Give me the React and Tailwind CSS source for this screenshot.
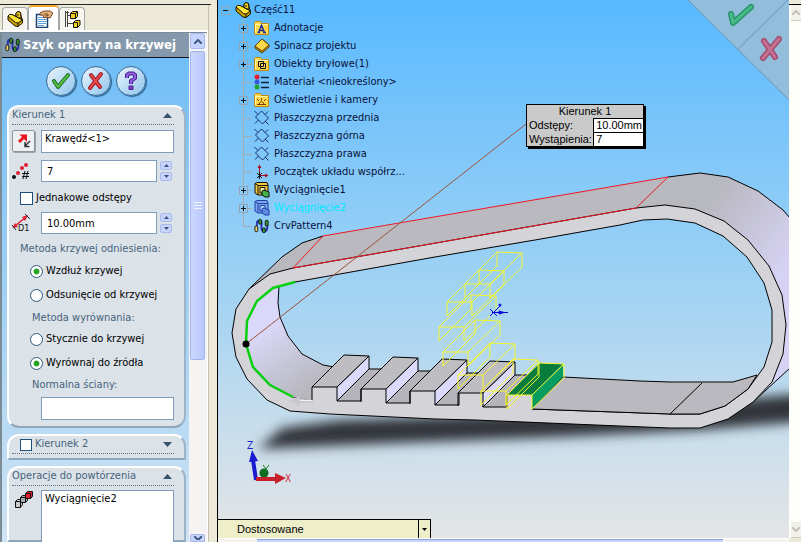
import React, { useState } from "react";

const PartIcon = () => (
  <svg className="w-4 h-4 shrink-0" viewBox="0 0 16 16" stroke="#1a1600" strokeWidth="1" strokeLinejoin="round">
    <path d="M1 5 L2.500 3.500 L5 3.500 L7 5 L9 5 L9 2 L11 0.500 L13.500 1.500 L14 5 L15.500 9 V12 L11 15.500 L8 15 L1 9 Z" fill="#c79f00" />
    <path d="M1 5 L2.500 3.500 L5 3.500 L15.500 9 L11 12 L8.500 11.500 Z" fill="#ffe63a" />
    <path d="M9 5 V2 L11 0.500 L13.500 1.500 L14 7.500 L10 6 Z" fill="#f3d024" />
    <path d="M11 12 V15.500 M11 3 V5" fill="none" />
  </svg>
);

const PropertiesIcon = () => (
  <svg className="w-[18px] h-[18px]" viewBox="0 0 18 18">
    <path d="M1.500 4.500 H12.500 V17.500 H1.500 Z" fill="#fff" stroke="#1a3d6e" strokeWidth="1.500" />
    <path d="M3 7.500 H11 M3 9.500 H11 M3 11.500 H11 M3 13.500 H11 M3 15.500 H9" stroke="#5aa2dc" />
    <path d="M5 3 L9 1 L15 1 L18 3 L15 8 L12 7 L9 8 L8 5 L5 5 Z" fill="#e9b27c" stroke="#7a4a22" />
    <path d="M9 4 L13 4 M10 6 L14 5" stroke="#7a4a22" />
  </svg>
);

const ConfigIcon = () => (
  <svg className="w-[18px] h-[18px]" viewBox="0 0 18 18" stroke="#111">
    <path d="M2.500 1 V17 M4.500 1 V17 M2 2.500 H6 M4 5.500 H9 M4 13.500 H10" fill="none" stroke="#444" />
    <path d="M7.500 3.500 L9.500 1.500 H14.500 V6.500 L12.500 8.500 H7.500 Z" fill="#f2cf1c" />
    <path d="M7.500 3.500 H12.500 V8.500 M12.500 3.500 L14.500 1.500" fill="none" />
    <path d="M10.500 12.500 L12.500 10.500 H17 V15 L14.500 17.500 H10.500 Z" fill="#f2cf1c" />
    <path d="M10.500 12.500 H14.500 V17.500" fill="none" />
  </svg>
);

const CurvePatternIcon = () => (
  <svg className="w-4 h-4 shrink-0" viewBox="0 0 17 16">
    <path d="M3 8 V5 Q3 2 6 2 Q9 2 8 7 Q7 14 11 14 Q15 14 14 6" fill="none" stroke="#2b33b8" strokeWidth="2" />
    <rect x="1" y="8" width="3" height="6" rx="1" fill="#efd76a" stroke="#111" />
    <rect x="5" y="1" width="3" height="5" rx="1" fill="#2f9a35" stroke="#111" />
    <rect x="9" y="10" width="3" height="5" rx="1" fill="#2f9a35" stroke="#111" />
    <rect x="12" y="2" width="3" height="6" rx="1" fill="#2f9a35" stroke="#111" />
  </svg>
);

const FolderIcon = ({ children }) => (
  <svg className="w-4 h-4 shrink-0" viewBox="0 0 16 16">
    <path d="M0.500 2.500 L1.500 1.500 H6.500 L7.500 3.500 H14.500 V14.500 H0.500 Z" fill="#ffd84a" stroke="#c08a10" />
    <path d="M1.500 3.500 V13.500 M1.500 4.500 H13.500" stroke="#fff3b0" />
    {children}
  </svg>
);

const PlaneIcon = () => (
  <svg className="w-4 h-4 shrink-0" viewBox="0 0 16 16" fill="none" stroke="#12306b">
    <path d="M0.500 1 L4 4.500 M7.500 1 L14.500 8 L8.500 14 L1.500 7 Z M11 11 L14.500 14.500 M1 13.500 L4.500 10 M11 4.500 L14 1.500" />
  </svg>
);

const ExtrudeIcon = ({ blue }) => (
  <svg className="w-4 h-4 shrink-0" viewBox="0 0 16 16" stroke={blue ? "#1f3fa8" : "#111"} strokeLinejoin="round">
    <path d="M1 1.500 L3 0.500 H13 L14 3 V13 H4 L1 11 Z" fill={blue ? "#7ea8ee" : "#f5c93a"} />
    <path d="M1 1.500 L4 3.500 H14 M4 3.500 V13" fill="none" />
    <path d="M6 5.500 H11 V11 H6 Z" fill={blue ? "#a9c8f8" : "#fff3a8"} />
    <path d="M8 9 L10 8 L15 10 V15 H11 L8 13 Z" fill={blue ? "#5f8ae0" : "#42b648"} />
  </svg>
);

const icons = {
  notes: (
    <FolderIcon>
      <path d="M4.500 12.500 L7.500 5.500 L10.500 12.500 M5.500 10.500 H9.500 M3.500 12.500 H6 M9 12.500 H12" fill="none" stroke="#1c2f9a" strokeWidth="1.500" />
    </FolderIcon>
  ),
  binder: (
    <svg className="w-4 h-4 shrink-0" viewBox="0 0 16 16" stroke="#5b4300">
      <path d="M1 8 L8 1 L15 7 L15 9 L8 15 L1 10 Z" fill="#c58f10" />
      <path d="M1 8 L8 1 L15 7 L8 13 Z" fill="#ffd84a" />
    </svg>
  ),
  solids: (
    <FolderIcon>
      <path d="M4.500 5.500 H9.500 V10.500 H4.500 Z M6.500 7.500 H11.500 V12.500 H6.500 Z" fill="none" stroke="#111" />
    </FolderIcon>
  ),
  material: (
    <svg className="w-4 h-4 shrink-0" viewBox="0 0 16 16">
      <circle cx="3" cy="3" r="2.500" fill="#e2202c" />
      <circle cx="3" cy="8" r="2.500" fill="#3a56d8" />
      <circle cx="3" cy="13" r="2.500" fill="#22a52e" />
      <path d="M7 3.500 H15 M7 8.500 H15 M7 13.500 H15" stroke="#123" strokeWidth="1.500" />
    </svg>
  ),
  lights: (
    <FolderIcon>
      <path d="M3 12.500 H12 M5 12 Q7.500 7 10 12 M7.500 8.500 V6 M5 9 L3 7 M10 9 L12 7" fill="none" stroke="#7a3b00" />
    </FolderIcon>
  ),
  plane: <PlaneIcon />,
  origin: (
    <svg className="w-4 h-4 shrink-0" viewBox="0 0 16 16">
      <path d="M5.500 12 V3 M5 11.500 H13" stroke="#a81222" />
      <path d="M5.500 0.500 L7.500 4 H3.500 Z M14.500 11.500 L11 9.500 V13.500 Z" fill="#a81222" />
      <path d="M3 9 L8 14 M8 9 L3 14 M5.500 8 V15" stroke="#111" />
    </svg>
  ),
  extrude: <ExtrudeIcon />,
  extrudeBlue: <ExtrudeIcon blue />,
  curve: <CurvePatternIcon />,
};

const treeItems = [
  { label: "Adnotacje", icon: "notes", expand: true },
  { label: "Spinacz projektu", icon: "binder", expand: true },
  { label: "Obiekty bryłowe(1)", icon: "solids", expand: true },
  { label: "Materiał <nieokreślony>", icon: "material" },
  { label: "Oświetlenie i kamery", icon: "lights", expand: true },
  { label: "Płaszczyzna przednia", icon: "plane" },
  { label: "Płaszczyzna górna", icon: "plane" },
  { label: "Płaszczyzna prawa", icon: "plane" },
  { label: "Początek układu współrz...", icon: "origin" },
  { label: "Wyciągnięcie1", icon: "extrude", expand: true },
  { label: "Wyciągnięcie2", icon: "extrudeBlue", expand: true, active: true },
  { label: "CrvPattern4", icon: "curve" },
];

const Expander = ({ sign, label }) => (
  <button aria-label={label} className="w-[9px] h-[9px] shrink-0 border border-[#8fa6b8] flex items-center justify-center">
    <svg className="w-[7px] h-[7px] shrink-0" viewBox="0 0 7 7" stroke="#111">
      <path d={sign === "-" ? "M1 3.500 H6" : "M1 3.500 H6 M3.500 1 V6"} />
    </svg>
  </button>
);

const FeatureTree = () => (
  <div className="absolute left-[3px] top-0 pt-px text-[11px] leading-[18px] text-[#08123a] whitespace-nowrap">
    <div className="flex items-center gap-[5px] h-[18px]">
      <Expander sign="-" label="Zwiń Część11" />
      <div className="flex items-center gap-[3px]">
        <PartIcon />
        <span>Część11</span>
      </div>
    </div>
    <ul className="relative pl-[18px]">
      <li aria-hidden="true" className="absolute left-[22px] top-0 bottom-2 border-l border-[#a3adb0]" />
      {treeItems.map((item) => (
        <li key={item.label} className="relative flex items-center h-[18px]">
          {item.expand ? (
            <Expander sign="+" label={`Rozwiń ${item.label}`} />
          ) : (
            <span className="w-[5px] ml-1 h-px bg-[#a3adb0]" />
          )}
          <span className="w-1 mr-0.5 h-px bg-[#a3adb0]" />
          {icons[item.icon]}
          <span className={item.active ? "ml-1 text-[#00e8ff]" : "ml-1"}>{item.label}</span>
        </li>
      ))}
    </ul>
  </div>
);

// front top-left corner of every previewed instance
const previews = [
  [465, 284],
  [447, 302],
  [439, 327],
  [443, 352],
  [458, 375],
  [481, 391],
  [507, 395],
];

// front top-left corner of every solid tooth
const teeth = [
  [312, 387],
  [361, 389],
  [410, 391],
  [458, 393],
];

const Model = () => (
  <svg className="absolute inset-0 w-full h-full" viewBox="218 0 571 538" preserveAspectRatio="xMinYMin slice">
    <defs>
      <linearGradient id="outer" gradientUnits="userSpaceOnUse" x1="680" y1="200" x2="785" y2="270">
        <stop offset="0.200" stopColor="#b8b8bf" />
        <stop offset="1" stopColor="#d6d2f4" />
      </linearGradient>
      <linearGradient id="inner" gradientUnits="userSpaceOnUse" x1="262" y1="330" x2="305" y2="395">
        <stop offset="0" stopColor="#dad8f8" />
        <stop offset="1" stopColor="#b6b6bc" />
      </linearGradient>
      <filter id="soft" x="-10%" y="-50%" width="120%" height="200%">
        <feGaussianBlur stdDeviation="6" />
      </filter>
    </defs>

    {/* Floor shadow */}
    <path d="M258 449 L282 428 L340 420 L560 412 L740 399 L810 393 V421 L700 430 L560 437 L400 443 Z" fill="#30363a" filter="url(#soft)" />

    {/* Outer band */}
    <path d="M249 289 L282 257 L302 243 L323 236 L668 177 L293 268 L270 274 Z" fill="#b8b8be" />
    <path d="M323 236 L668 177 L636 208 L293 268 Z" fill="#bab9c0" />
    <path d="M668 177 L700 173 L728 177 L758 191 L783 210 L790 218 V368 L753 402 L772 382 L786 325 L769 266 L724 221 L665 205 L636 208 Z" fill="url(#outer)" />
    <path d="M249 289 L282 257 L302 243 L323 236 M668 177 L700 173 L728 177 L758 191 L783 210 L790 218 M753 402 L790 368" fill="none" stroke="#000" />

    {/* Front face with its opening */}
    <path
      fillRule="evenodd"
      d="M293 268 L270 274 L249 289 L236 309 L232 333 L236 357 L247 379 L267 400 L290 411 L330 414 L435 419 L475 420 L620 426 L670 428 L700 428 L728 419 L753 402 L772 382 L783 354 L786 325 L782 295 L769 266 L748 240 L724 221 L695 209 L665 205 L636 208 Z
         M295 282 L435 257 L535 240 L620 225 L643 220 L667 219 L695 223 L723 236 L747 257 L764 283 L772 310 V342 L764 367 L748 389 L725 406 L700 414 L670 414 L532 409 L312 400 L293 397 L270 385 L253 367 L246 344 L247 321 L257 301 L273 288 Z"
      fill="#d3d3d8"
      stroke="#000"
    />

    {/* Inside surfaces */}
    <path d="M279 286 L278 303 L280 317 L288 336 L302 354 L323 365 L333 367 L352 371 L320 403 L293 397 L270 385 L253 367 L246 344 L247 321 L257 301 L273 288 Z" fill="url(#inner)" />
    <path d="M279 286 L278 303 L280 317 L288 336 L302 354 L323 365 L334 367" fill="none" stroke="#000" />
    <path d="M563 377 L640 381 L670 382 L733 382 L757 375 L748 389 L725 406 L700 414 L670 414 L532 409 Z" fill="#bab9bf" stroke="#000" />
    <path d="M702 383 L670 414" stroke="#000" />

    {/* Solid teeth */}
    <path d="M312 402 V387 H337 V401 H361 V389 H386 V403 H410 V391 H434 V405 H458 V393 H482 V407 H507 V395 H532 V412 H312 Z" fill="#d3d3d8" />
    {teeth.map(([x, y]) => (
      <g key={x} stroke="#000" strokeLinejoin="round">
        <path d={`M${x + 25} ${y + 14} L${x + 57} ${y - 18} L${x + 69} ${y - 18} L${x + 49} ${y + 2} V${y + 14} Z`} fill="#b5b4ba" />
        <path d={`M${x + 25} ${y} L${x + 57} ${y - 31} V${y - 18} L${x + 25} ${y + 14} Z`} fill="#dcdafa" />
        <path d={`M${x} ${y} L${x + 32} ${y - 32} L${x + 57} ${y - 31} L${x + 25} ${y} Z`} fill="#bebdc2" />
        <path d={`M${x} ${y + 13} V${y}`} />
      </g>
    ))}

    {/* Source tooth */}
    <path d="M507 395 L540 363 L563 364 L532 395 Z" fill="#087c3d" />
    <path d="M532 395 L563 364 V377 L532 409 Z" fill="#079c60" />

    {/* Pattern preview */}
    <g fill="none" stroke="#f6f62c">
      {previews.map(([x, y]) => (
        <path
          key={`${x}-${y}`}
          d={`M${x} ${y + 14} V${y} H${x + 25} V${y + 14} M${x + 32} ${y - 18} V${y - 32} L${x + 57} ${y - 31} V${y - 17} M${x} ${y} l32 -32 M${x + 25} ${y} l32 -31 M${x + 25} ${y + 14} l32 -31 M${x} ${y + 14} l32 -32`}
        />
      ))}
    </g>

    {/* Highlighted edges */}
    <path d="M323 236 L668 177 L636 208 L293 268 Z" fill="none" stroke="#f01824" />
    <path d="M295 282 L273 288 L257 301 L247 321 L246 344 L253 367 L270 385 L293 397" fill="none" stroke="#08d010" strokeWidth="2.500" />
    <path d="M289 401 L300 396 V400 H313 V403 H300 V406 Z" fill="#c9c9cd" />
    <path d="M300 400.500 H312" stroke="#f4f4f6" />
    <path d="M526 124 L246 344" stroke="#9c5238" />
    <circle cx="246" cy="344" r="3.500" fill="#000" />

    {/* Centre mark */}
    <g stroke="#0808d8" fill="#0808d8">
      <path d="M492 312.500 H508 M492 314 L501 305 M490 309 L497 316 M497 309 L490 316" />
      <path d="M504 312.500 L499 311 V314 Z" />
      <circle cx="500" cy="305" r="1" />
    </g>

    {/* Triad */}
    <circle cx="264" cy="473" r="4.500" fill="#0d6b22" />
    <path d="M263 465 L266 469 L269 465 M266 469 V473" stroke="#16852c" fill="none" />
    <path d="M256 480 L253 460" stroke="#1a1ad0" strokeWidth="4" />
    <path d="M252 450 L258 461 L249 462 Z" fill="#1a1ad0" />
    <path d="M256 479 H276" stroke="#c8202a" strokeWidth="4" />
    <path d="M286 478 L275 473 V484 Z" fill="#c8202a" />
    <text x="247" y="449" fontSize="10" fill="#2020d0">Z</text>
    <text x="285" y="482" fontSize="10" fill="#d0203a">X</text>

    {/* Confirmation corner */}
    <path d="M688 0 H790 V101 Z" fill="#93bedb" />
    <path d="M688 0 L790 101" stroke="#6d95b3" />
    <path d="M738 49 L788 0" stroke="#78a9cd" strokeWidth="1.500" />
    <g fill="none" strokeLinecap="round" strokeLinejoin="round">
      <path d="M731 14 L733 23 L751 7" stroke="#2b956b" strokeWidth="6" />
      <path d="M731 14 L733 23 L751 7" stroke="#48bb87" strokeWidth="3" />
      <path d="M764 41 L775 57 M779 39 L763 58" stroke="#a24d73" strokeWidth="6" />
      <path d="M764 41 L775 57 M779 39 L763 58" stroke="#c5708f" strokeWidth="3" />
    </g>
  </svg>
);

const Callout = () => (
  <table
    aria-label="Parametry wzoru"
    className="absolute left-[308px] top-[104px] w-[118px] bg-[#cacaca] border border-black shadow-[2px_2px_0_#000] font-['Liberation_Sans',sans-serif] text-[11px] leading-[13px] text-black whitespace-nowrap border-collapse"
  >
    <tbody>
      <tr>
        <th colSpan={2} className="font-normal p-0">Kierunek 1</th>
      </tr>
      <tr>
        <th scope="row" className="font-normal text-left p-0 pl-0.5">Odstępy:</th>
        <td className="bg-white border border-black p-0 pl-0.5">10.00mm</td>
      </tr>
      <tr>
        <th scope="row" className="font-normal text-left p-0 pl-0.5">Wystąpienia:</th>
        <td className="bg-white border border-black p-0 pl-0.5">7</td>
      </tr>
    </tbody>
  </table>
);

const RoundButton = ({ label, children }) => (
  <button
    aria-label={label}
    className="w-[30px] h-[30px] rounded-full border border-[#3d6c94] bg-linear-to-br from-[#eaf5fd] to-[#8fc4ec] shadow-[1px_1px_1px_#2d5f8c] flex items-center justify-center"
  >
    {children}
  </button>
);

const Spinner = () => (
  <div className="flex flex-col gap-0.5 ml-[3px]">
    {["M0 3 L2.500 0 L5 3 Z", "M0 0 L2.500 3 L5 0 Z"].map((d, i) => (
      <button key={d} aria-label={i ? "Zmniejsz" : "Zwiększ"} className="w-3 h-[9px] rounded-xs border border-[#a9bbe8] bg-[#c6d4fb] flex items-center justify-center">
        <svg className="w-[5px] h-[3px]" viewBox="0 0 5 3" fill="#3c4f80">
          <path d={d} />
        </svg>
      </button>
    ))}
  </div>
);

const Group = ({ title, open = true, last, checkbox, children }) => (
  <section
    className={
      (last ? "flex-1 " : open ? "rounded-b-xl pb-[6px] " : "pb-1 ") +
      "rounded-t-xl border-2 border-t-white border-l-white border-r-[#9db4c8] border-b-[#8ea6ba] bg-[#dbe2e8] pl-[3px] pr-2.5"
    }
  >
    <h2 className="flex items-center justify-between h-[18px] border-b border-dotted border-[#5f7384] text-[#47637c]">
      {checkbox ? (
        <label className="flex items-center gap-[3px] pl-2">
          <input type="checkbox" className="appearance-none w-3 h-3 border border-[#1f4f7c] bg-white" />
          {title}
        </label>
      ) : (
        <span>{title}</span>
      )}
      <button aria-label={open ? `Zwiń ${title}` : `Rozwiń ${title}`} className="pr-0.5">
        <svg className="w-[9px] h-[5px]" viewBox="0 0 9 5" fill="#36516b">
          <path d={open ? "M0 5 L4.500 0 L9 5 Z" : "M0 0 L4.500 5 L9 0 Z"} />
        </svg>
      </button>
    </h2>
    {children}
  </section>
);

const Radio = ({ name, label, checked, onChange }) => (
  <label className="flex items-center gap-[3px] h-6 pl-[18px]">
    <input
      type="radio"
      name={name}
      checked={checked}
      onChange={onChange}
      className="appearance-none w-[13px] h-[13px] rounded-full border border-[#2f5878] bg-white checked:bg-radial checked:from-[#22a322] checked:from-30% checked:to-white checked:to-45%"
    />
    {label}
  </label>
);

const inputStyle = "border border-[#7f9db9] bg-white px-[3px] outline-none min-w-0";

const PropertyPanel = () => {
  const [reference, setReference] = useState("along");
  const [align, setAlign] = useState("source");

  return (
    <div className="flex-1 min-w-0 flex flex-col bg-linear-to-b from-[#6bbcf8] via-[#9fd0f5] to-[#cfe3f3]">
      <h1 className="flex items-center gap-0.5 h-[25px] shrink-0 px-[3px] bg-[#8499ab] border-b border-[#111] text-white text-[13px] font-bold whitespace-nowrap">
        <CurvePatternIcon />
        Szyk oparty na krzywej
      </h1>
      <div className="flex items-center justify-center gap-[5px] h-[45px] shrink-0">
        <RoundButton label="OK">
          <svg className="w-5 h-5" viewBox="0 0 20 20" fill="none" strokeLinecap="round" strokeLinejoin="round">
            <path d="M3 10 L7 16 L17 4" stroke="#1c6b2a" strokeWidth="4" />
            <path d="M3 10 L7 16 L17 4" stroke="#55c040" strokeWidth="2" />
          </svg>
        </RoundButton>
        <RoundButton label="Anuluj">
          <svg className="w-5 h-5" viewBox="0 0 20 20" fill="none" strokeLinecap="round">
            <path d="M5 4 L14 16 M15 3 L4 17" stroke="#9c1c28" strokeWidth="4" />
            <path d="M5 4 L14 16 M15 3 L4 17" stroke="#f04a4a" strokeWidth="2" />
          </svg>
        </RoundButton>
        <RoundButton label="Pomoc">
          <svg className="w-5 h-5" viewBox="0 0 20 20" fill="none">
            <path d="M6 7 V4 L8 2.500 H12 L14 4 V7 L10 10 V13" stroke="#4c1f96" strokeWidth="4" />
            <path d="M6 7 V4 L8 2.500 H12 L14 4 V7 L10 10 V13" stroke="#9460dc" strokeWidth="2" />
            <path d="M8 15 H12 V18.500 H8 Z" fill="#7a3fc4" stroke="#4c1f96" />
          </svg>
        </RoundButton>
      </div>

      <div className="flex-1 min-h-0 flex flex-col gap-[6px] pl-[5px] pr-[3px] pt-0.5">
        <Group title="Kierunek 1">
          <div className="flex items-center mt-1 h-6">
            <button aria-label="Odwróć kierunek" className="w-[23px] h-[22px] mr-[6px] shrink-0 rounded-xs border border-[#8d949c] bg-[#eef0f2] shadow-[1px_1px_0_#9aa3ab] flex items-center justify-center">
              <svg className="w-4 h-4" viewBox="0 0 16 16">
                <path d="M3 9 L8 4" stroke="#e8141c" strokeWidth="3" />
                <path d="M3.500 1.500 H11 V9 Z" fill="#e8141c" />
                <path d="M14 8 L9 13 M9 9 V13.500 H13.500" fill="none" stroke="#333" strokeWidth="1.500" />
              </svg>
            </button>
            <input aria-label="Kierunek wzoru" className={`${inputStyle} flex-1 h-[23px] pb-[5px]`} defaultValue="Krawędź<1>" />
          </div>
          <div className="flex items-center mt-[6px] h-6">
            <svg className="w-[19px] h-[18px] mr-2.5 shrink-0" viewBox="0 0 19 18">
              <circle cx="2" cy="15" r="2" fill="#111" />
              <g fill="#e02030">
                <circle cx="6" cy="11" r="2" />
                <circle cx="10" cy="6" r="2" />
                <circle cx="14" cy="3" r="2" />
              </g>
              <path d="M13 9 L11 17 M16 9 L14 17 M10 11.500 H17 M10 14.500 H17" stroke="#111" />
            </svg>
            <input aria-label="Liczba wystąpień" className={`${inputStyle} flex-1 h-[22px] pl-[5px]`} defaultValue="7" />
            <Spinner />
            <span className="w-0.5" />
          </div>
          <label className="flex items-center gap-[3px] mt-[3px] h-6 pl-2">
            <input type="checkbox" className="appearance-none w-[13px] h-[13px] border border-[#1f4f7c] bg-white" />
            Jednakowe odstępy
          </label>
          <div className="flex items-center mt-px h-6">
            <svg className="w-[19px] h-[18px] mr-2.5 shrink-0" viewBox="0 0 19 18">
              <path d="M3 12 L14 3" stroke="#e02030" strokeWidth="1.500" />
              <path d="M0.500 14 L3 9 L6 13 Z M16 1 L10 3 L13 7 Z" fill="#e02030" />
              <path d="M0 11 L4 16 M13 0 L18 5" stroke="#222" />
              <text x="6" y="17" fontSize="9" fill="#111">D1</text>
            </svg>
            <input aria-label="Odstęp" className={`${inputStyle} flex-1 h-[22px] pl-[5px]`} defaultValue="10.00mm" />
            <Spinner />
            <span className="w-0.5" />
          </div>
          <fieldset>
            <legend className="pl-2 pt-[5px] h-6 leading-[18px] text-[#47637c]">Metoda krzywej odniesienia:</legend>
            <Radio name="reference" label="Wzdłuż krzywej" checked={reference === "along"} onChange={() => setReference("along")} />
            <Radio name="reference" label="Odsunięcie od krzywej" checked={reference === "offset"} onChange={() => setReference("offset")} />
          </fieldset>
          <fieldset>
            <legend className="pl-5 pt-0.5 h-5 leading-[18px] text-[#47637c]">Metoda wyrównania:</legend>
            <Radio name="align" label="Stycznie do krzywej" checked={align === "tangent"} onChange={() => setAlign("tangent")} />
            <Radio name="align" label="Wyrównaj do źródła" checked={align === "source"} onChange={() => setAlign("source")} />
          </fieldset>
          <label htmlFor="normal" className="block pl-5 h-[22px] leading-[20px] text-[#47637c]">Normalna ściany:</label>
          <div className="flex pl-[29px]">
            <input id="normal" className={`${inputStyle} flex-1 h-[23px]`} />
          </div>
        </Group>
        <Group title="Kierunek 2" open={false} checkbox />
        <Group title="Operacje do powtórzenia" last>
          <div className="flex mt-1 h-full">
            <svg className="w-[19px] h-[18px] ml-[3px] mr-[7px] shrink-0" viewBox="0 0 19 18" stroke="#111">
              <path d="M0.500 11.500 L2.500 9.500 H7.500 V14.500 L5.500 17.500 H0.500 Z M0.500 11.500 H5.500 V17.500" fill="#c9c9c9" />
              <path d="M5.500 7.500 L7.500 5.500 H12.500 V10.500 L10.500 12.500 H5.500 Z M5.500 7.500 H10.500 V12.500" fill="#aaa" />
              <path d="M10.500 3.500 L12.500 1.500 H17.500 V6.500 L15.500 8.500 H10.500 Z M10.500 3.500 H15.500 V8.500" fill="#e02030" />
            </svg>
            <textarea aria-label="Operacje do powtórzenia" className={`${inputStyle} flex-1 h-full resize-none`} defaultValue="Wyciągnięcie2" />
          </div>
        </Group>
      </div>
    </div>
  );
};

const tabs = [
  { label: "Drzewo operacji", icon: <PartIcon /> },
  { label: "Właściwości", icon: <PropertiesIcon />, active: true },
  { label: "Konfiguracje", icon: <ConfigIcon /> },
];

const scrollButton = "w-full h-4 shrink-0 rounded-xs border border-[#a9b9ee] bg-[#c6d3fc] flex items-center justify-center";

const Sidebar = () => (
  <aside className="w-[218px] shrink-0 flex flex-col bg-[#ece9d8] border-r border-black">
    <div className="h-[5px] mr-1.5 border-b border-[#222] shrink-0" />
    <div className="flex-1 min-h-0 flex flex-col mr-2 border-r border-[#c5c1ad]">
      <div role="tablist" className="flex items-end h-[25px] shrink-0 pl-0.5">
        {tabs.map((tab) => (
          <button
            key={tab.label}
            role="tab"
            aria-label={tab.label}
            aria-selected={!!tab.active}
            className={
              tab.active
                ? "w-[31px] h-[25px] bg-white border-x border-t-2 border-x-[#a0a8a8] border-t-[#f2a92c] rounded-t-sm flex items-center justify-center"
                : "w-[26px] h-[23px] bg-[#f6f5ef] border border-b-0 border-[#a0a8a8] rounded-t-sm flex items-center justify-center"
            }
          >
            {tab.icon}
          </button>
        ))}
      </div>
      <div className="flex-1 min-h-0 flex border-t-2 border-white">
        <div className="flex-1 min-w-0 flex border-t border-l-2 border-[#7c8c96]">
          <PropertyPanel />
          <div className="w-[18px] pl-px pr-0.5 flex flex-col bg-[#f5f4f2]">
            <button aria-label="Przewiń w górę" className={scrollButton}>
              <svg className="w-2 h-[5px]" viewBox="0 0 8 5" fill="none" stroke="#3f5a86" strokeWidth="2">
                <path d="M0 5 L4 1 L8 5" />
              </svg>
            </button>
            <div className="mt-0.5 h-[309px] rounded-xs border border-[#a3b4ea] bg-linear-to-r from-[#ccd8fe] to-[#b8c8fa] flex items-center justify-center">
              <svg className="w-2 h-2" viewBox="0 0 8 8" stroke="#f3f6ff">
                <path d="M0 0.500 H8 M0 3.500 H8 M0 6.500 H8" />
              </svg>
            </div>
            <div className="flex-1" />
            <button aria-label="Przewiń w dół" className="w-full h-2 shrink-0 rounded-t-xs border border-[#a9b9ee] bg-[#c6d3fc] flex items-center justify-center">
              <svg className="w-2 h-1" viewBox="0 0 8 4" fill="none" stroke="#3f5a86" strokeWidth="2">
                <path d="M0 0 L4 4 L8 0" />
              </svg>
            </button>
          </div>
        </div>
        <div className="w-px bg-white" />
      </div>
    </div>
  </aside>
);

const ConfigSelect = () => (
  <div className="flex h-[19px] w-[213px] bg-[#eeeec8] border-t border-r border-black font-['Liberation_Sans',sans-serif] text-[11px] text-black">
    <select aria-label="Widok" className="flex-1 appearance-none pl-[19px] outline-none">
      <option>Dostosowane</option>
    </select>
    <span className="w-3 border-l border-black flex items-center justify-center pointer-events-none">
      <svg className="w-[5px] h-[3px]" viewBox="0 0 5 3">
        <path d="M0 0 H5 L2.500 3 Z" />
      </svg>
    </span>
  </div>
);

const App = () => {
  return (
    <div className="h-screen flex overflow-hidden font-['DejaVu_Sans_Condensed','DejaVu_Sans',sans-serif] text-[11px] text-black">
      <Sidebar />
      <main className="flex-1 min-w-0 flex flex-col">
        <div className="relative flex-1 min-h-0 overflow-hidden flex flex-col justify-end bg-linear-to-b from-[#57b9ff] via-[#9bd1f4] to-[#e4e5e6]">
          <Model />
          <FeatureTree />
          <Callout />
          <div className="relative">
            <ConfigSelect />
          </div>
        </div>
        <div className="h-1 shrink-0 flex bg-[#f4f3ee] border-t border-white">
          <div className="ml-[39px] mr-[66px] flex-1 border-t border-[#8ea3d6] bg-[#c6d3fc]" />
        </div>
      </main>
      <div className="w-3 shrink-0 flex flex-col bg-[#fefefa]">
        <div className="h-[5px] bg-[#ece9d8] border-b border-black" />
        <button aria-label="Widok w górę" className="h-4 ml-0.5 bg-[#f1f0e9] border-b border-[#cfcdc0] flex items-center justify-center">
          <svg className="w-2 h-[5px]" viewBox="0 0 8 5" fill="none" stroke="#c3c2b6" strokeWidth="2">
            <path d="M0 5 L4 1 L8 5" />
          </svg>
        </button>
        <div className="flex-1" />
        <button aria-label="Widok w dół" className="h-4 ml-0.5 bg-[#f1f0e9] border-b border-[#cfcdc0] flex items-center justify-center">
          <svg className="w-2 h-[5px]" viewBox="0 0 8 5" fill="none" stroke="#c3c2b6" strokeWidth="2">
            <path d="M0 0 L4 4 L8 0" />
          </svg>
        </button>
        <div className="h-1 bg-[#ece9d8]" />
      </div>
    </div>
  );
};

export default App;
